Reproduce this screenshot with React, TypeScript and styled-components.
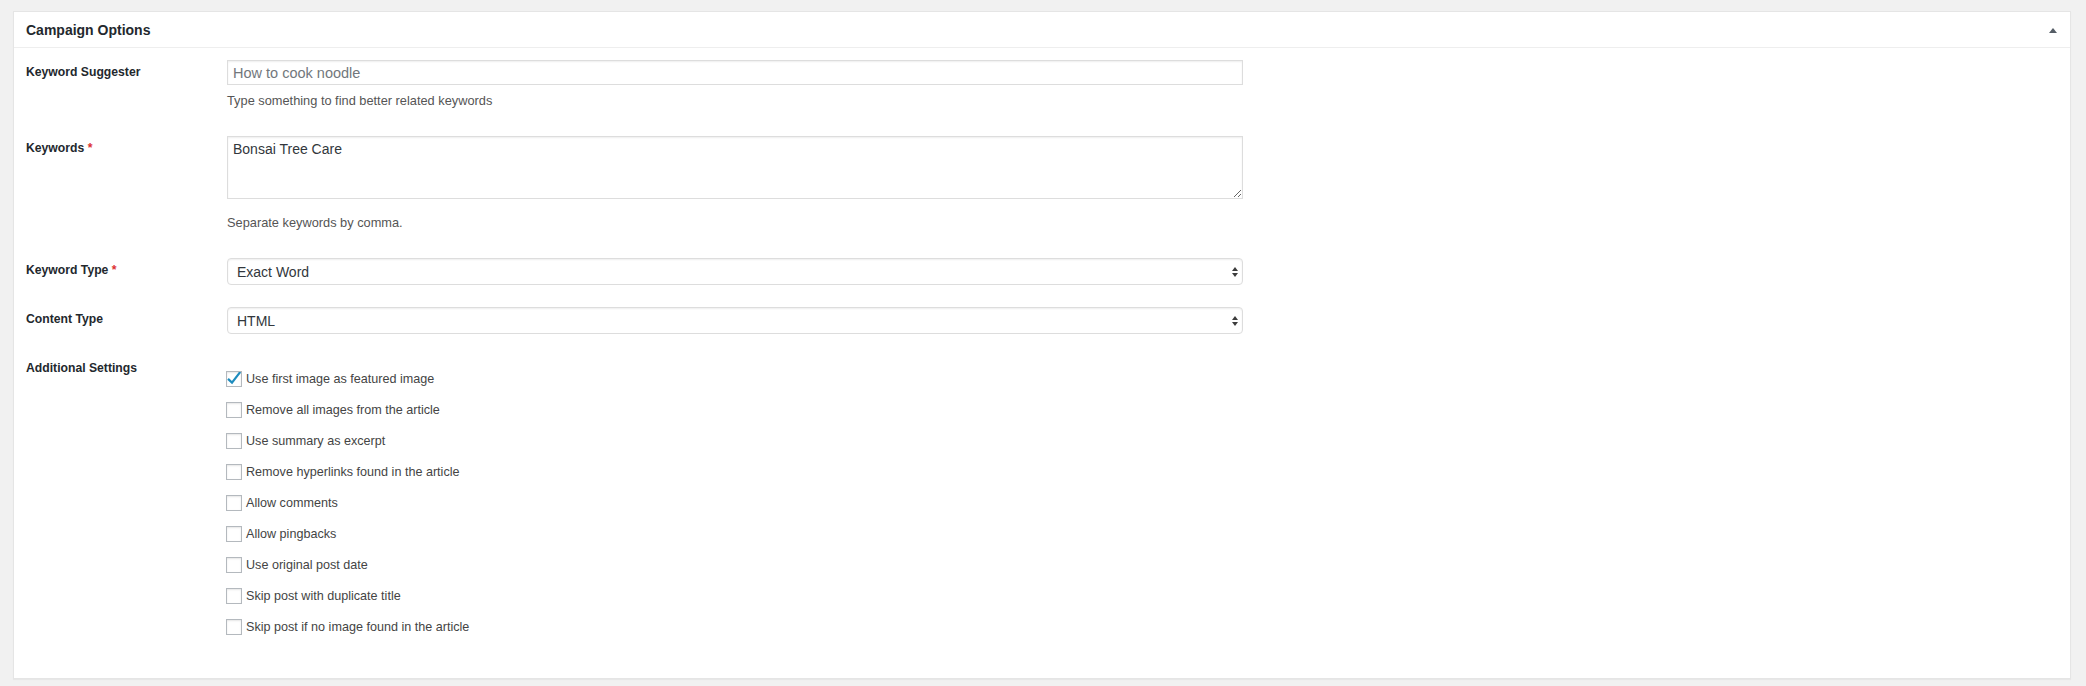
import React from "react";
import styled, { createGlobalStyle } from "styled-components";

const GlobalStyle = createGlobalStyle`
  html, body {
    margin: 0;
    padding: 0;
    background: #f1f1f1;
  }
  body {
    font-family: "Liberation Sans", Arial, sans-serif;
    color: #444;
  }
  *, *::before, *::after {
    box-sizing: border-box;
  }
`;

const Page = styled.div`
  padding: 11px 15px 9px 13px;
`;

const Panel = styled.section`
  background: #fff;
  border: 1px solid #e5e5e5;
  box-shadow: 0 1px 1px rgba(0, 0, 0, 0.04);
`;

const Header = styled.div`
  display: flex;
  align-items: center;
  justify-content: space-between;
  height: 36px;
  padding: 1px 13px 0 12px;
  border-bottom: 1px solid #eee;
`;

const Title = styled.h2`
  margin: 0;
  font-size: 14px;
  font-weight: 700;
  line-height: 34px;
  color: #23282d;
`;

const Toggle = styled.svg`
  display: block;
  fill: #555d66;
`;

const Body = styled.div`
  display: flex;
  flex-direction: column;
  padding: 12px 12px 43px;
`;

const Row = styled.div<{ $gap: number }>`
  display: grid;
  grid-template-columns: 201px 1016px;
  align-items: start;
  margin-top: ${(p) => p.$gap}px;
`;

const Label = styled.div`
  padding-top: 3px;
  font-size: 12.2px;
  font-weight: 700;
  line-height: 18px;
  color: #23282d;
`;

const Required = styled.span`
  color: #dc3232;
`;

const Field = styled.div`
  display: flex;
  flex-direction: column;
`;

const TextInput = styled.input`
  width: 100%;
  height: 25px;
  margin: 0;
  padding: 0 5px;
  border: 1px solid #ddd;
  border-radius: 0;
  background: #fff;
  box-shadow: inset 0 1px 2px rgba(0, 0, 0, 0.07);
  font-family: "Liberation Sans", Arial, sans-serif;
  font-size: 14.5px;
  color: #32373c;
  outline: none;
  &::placeholder {
    color: #72777c;
  }
`;

const TextArea = styled.textarea`
  display: block;
  width: 100%;
  height: 63px;
  margin: 0;
  padding: 4px 5px;
  border: 1px solid #ddd;
  border-radius: 0;
  background: #fff;
  box-shadow: inset 0 1px 2px rgba(0, 0, 0, 0.07);
  font-family: "Liberation Sans", Arial, sans-serif;
  font-size: 14px;
  line-height: normal;
  color: #32373c;
  outline: none;
  resize: both;
`;

const Description = styled.p<{ $top: number }>`
  margin: ${(p) => p.$top}px 0 0;
  font-size: 12.8px;
  line-height: 19px;
  color: #555;
`;

const SelectWrap = styled.div`
  position: relative;
  width: 100%;
`;

const Select = styled.select`
  display: block;
  width: 100%;
  height: 27px;
  margin: 0;
  padding: 0 24px 0 9px;
  appearance: none;
  -webkit-appearance: none;
  border: 1px solid #ddd;
  border-radius: 4px;
  background: #fff;
  box-shadow: inset 0 1px 2px rgba(0, 0, 0, 0.07);
  font-family: "Liberation Sans", Arial, sans-serif;
  font-size: 14px;
  color: #32373c;
  outline: none;
`;

const SelectArrows = styled.svg`
  position: absolute;
  right: 5px;
  top: 50%;
  transform: translateY(-50%);
  fill: #3c3c3c;
  pointer-events: none;
`;

const CheckList = styled.div`
  display: flex;
  flex-direction: column;
  gap: 15px;
  padding-top: 15px;
  margin-left: -1px;
`;

const CheckItem = styled.label`
  display: flex;
  align-items: center;
  gap: 4px;
  height: 16px;
  font-size: 12.6px;
  line-height: 16px;
  color: #444;
  cursor: pointer;
`;

const CheckBox = styled.span`
  display: flex;
  align-items: center;
  justify-content: center;
  flex-shrink: 0;
  width: 16px;
  height: 16px;
  border: 1px solid #b4b9be;
  background: #fff;
  box-shadow: inset 0 1px 2px rgba(0, 0, 0, 0.1);
`;

const CheckMark = styled.svg`
  display: block;
  fill: none;
  stroke: #1e8cbe;
  stroke-width: 2.2;
  stroke-linecap: square;
`;

const options = [
  { label: "Use first image as featured image", checked: true },
  { label: "Remove all images from the article", checked: false },
  { label: "Use summary as excerpt", checked: false },
  { label: "Remove hyperlinks found in the article", checked: false },
  { label: "Allow comments", checked: false },
  { label: "Allow pingbacks", checked: false },
  { label: "Use original post date", checked: false },
  { label: "Skip post with duplicate title", checked: false },
  { label: "Skip post if no image found in the article", checked: false },
];

function SelectBox({ value, items }: { value: string; items: string[] }) {
  return (
    <SelectWrap>
      <Select defaultValue={value}>
        {items.map((it) => (
          <option key={it}>{it}</option>
        ))}
      </Select>
      <SelectArrows width="6" height="10" viewBox="0 0 6 10">
        <polygon points="0,4 3,0 6,4" />
        <polygon points="0,6 6,6 3,10" />
      </SelectArrows>
    </SelectWrap>
  );
}

export default function App() {
  return (
    <>
      <GlobalStyle />
      <Page>
        <Panel>
          <Header>
            <Title>Campaign Options</Title>
            <Toggle width="8" height="5" viewBox="0 0 8 5">
              <polygon points="0,5 4,0 8,5" />
            </Toggle>
          </Header>
          <Body>
            <Row $gap={0}>
              <Label>Keyword Suggester</Label>
              <Field>
                <TextInput type="text" placeholder="How to cook noodle" />
                <Description $top={6}>
                  Type something to find better related keywords
                </Description>
              </Field>
            </Row>
            <Row $gap={26}>
              <Label>
                Keywords <Required>*</Required>
              </Label>
              <Field>
                <TextArea defaultValue="Bonsai Tree Care" />
                <Description $top={14}>Separate keywords by comma.</Description>
              </Field>
            </Row>
            <Row $gap={26}>
              <Label>
                Keyword Type <Required>*</Required>
              </Label>
              <Field>
                <SelectBox
                  value="Exact Word"
                  items={["Exact Word", "Broad Match", "Phrase"]}
                />
              </Field>
            </Row>
            <Row $gap={22}>
              <Label>Content Type</Label>
              <Field>
                <SelectBox value="HTML" items={["HTML", "Plain Text"]} />
              </Field>
            </Row>
            <Row $gap={22}>
              <Label>Additional Settings</Label>
              <CheckList>
                {options.map((o) => (
                  <CheckItem key={o.label}>
                    <CheckBox>
                      {o.checked && (
                        <CheckMark width="14" height="14" viewBox="0 0 14 14">
                          <polyline points="1.8,7.6 5,10.6 12.6,0.8" />
                        </CheckMark>
                      )}
                    </CheckBox>
                    {o.label}
                  </CheckItem>
                ))}
              </CheckList>
            </Row>
          </Body>
        </Panel>
      </Page>
    </>
  );
}
